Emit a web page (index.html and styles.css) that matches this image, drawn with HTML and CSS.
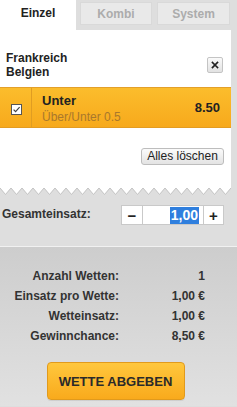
FILE: index.html
```html
<!DOCTYPE html>
<html lang="de">
<head>
<meta charset="utf-8">
<title>Wettschein</title>
<link rel="stylesheet" href="styles.css">
</head>
<body>
<div class="app">
  <div class="top">
    <div class="tabs">
      <div class="tab tab-active">Einzel</div>
      <div class="tab tab-off tab-kombi">Kombi</div>
      <div class="tab tab-off tab-system">System</div>
    </div>
    <div class="card">
      <div class="event">
        <div class="teams">Frankreich<br>Belgien</div>
        <button class="close-btn" aria-label="Entfernen">
          <svg width="8" height="8" viewBox="0 0 8 8"><path d="M1.5 1.5 L6.5 6.5 M6.5 1.5 L1.5 6.5" stroke="#222" stroke-width="1.7" stroke-linecap="square"/></svg>
        </button>
      </div>
      <div class="pick">
        <div class="pick-check">
          <svg width="11" height="11" viewBox="0 0 11 11"><rect x="0.5" y="0.5" width="10" height="10" fill="#fff" stroke="#555"/><path d="M2.6 5.6 L4.6 7.6 L8.6 3.2" fill="none" stroke="#444" stroke-width="1.2"/></svg>
        </div>
        <div class="pick-info">
          <div class="pick-name">Unter</div>
          <div class="pick-market">Über/Unter 0.5</div>
        </div>
        <div class="pick-odds">8.50</div>
      </div>
      <div class="clear-row">
        <button class="clear-btn">Alles löschen</button>
      </div>
    </div>
    <svg class="zigzag" width="231" height="8" viewBox="0 0 231 8">
      <defs>
        <pattern id="zz" width="11" height="8" patternUnits="userSpaceOnUse">
          <path d="M0 0 L5.5 6.5 L11 0 Z" fill="#fff"/>
          <path d="M0 0 L5.5 6.5 L11 0" fill="none" stroke="#c2c2c2" stroke-width="1"/>
        </pattern>
      </defs>
      <rect x="0" y="0" width="231" height="8" fill="url(#zz)"/>
    </svg>
    <div class="stake-row">
      <div class="stake-label">Gesamteinsatz:</div>
      <div class="stepper">
        <div class="step step-minus">−</div>
        <div class="stake-input"><span class="sel">1,00</span></div>
        <div class="step step-plus">+</div>
      </div>
    </div>
  </div>
  <div class="summary">
    <div class="sum-grid">
      <div class="sum-label">Anzahl Wetten:</div><div class="sum-val">1</div>
      <div class="sum-label">Einsatz pro Wette:</div><div class="sum-val">1,00 €</div>
      <div class="sum-label">Wetteinsatz:</div><div class="sum-val">1,00 €</div>
      <div class="sum-label">Gewinnchance:</div><div class="sum-val">8,50 €</div>
    </div>
    <div class="place-row">
      <button class="place-btn">WETTE ABGEBEN</button>
    </div>
  </div>
</div>
</body>
</html>
```
FILE: styles.css
```css
* { box-sizing: border-box; }
html, body {
  margin: 0;
  padding: 0;
}
body {
  width: 237px;
  height: 407px;
  overflow: hidden;
  background: #dedede;
  font-family: "Liberation Sans", Arial, sans-serif;
  font-size: 12px;
  color: #222;
}
button {
  font-family: inherit;
  margin: 0;
  padding: 0;
  cursor: pointer;
}
.app {
  display: flex;
  flex-direction: column;
}
.top {
  width: 231px;
  display: flex;
  flex-direction: column;
}
.tabs {
  display: flex;
  align-items: flex-start;
  height: 30px;
}
.tab {
  font-weight: bold;
  font-size: 12px;
  display: flex;
  align-items: center;
  justify-content: center;
}
.tab-active {
  width: 76px;
  height: 30px;
  background: #fff;
  color: #222;
  padding-bottom: 4px;
}
.tab-off {
  margin-top: 2px;
  height: 23px;
  background: #e9e9e9;
  border: 1px solid #d9d9d9;
  color: #acacac;
  padding-top: 1px;
}
.tab-kombi {
  width: 72px;
  margin-left: 4px;
}
.tab-system {
  width: 73px;
  margin-left: 5px;
}
.card {
  background: #fff;
  display: flex;
  flex-direction: column;
  padding-bottom: 23px;
}
.event {
  display: flex;
  align-items: center;
  justify-content: space-between;
  padding: 21px 8px 0 6px;
}
.teams {
  font-size: 12px;
  font-weight: bold;
  line-height: 14px;
  color: #222;
}
.close-btn {
  width: 16px;
  height: 16px;
  border: 1px solid #c4c4c4;
  border-radius: 2px;
  background: linear-gradient(#fafafa, #e2e2e2);
  display: flex;
  align-items: center;
  justify-content: center;
  margin-top: -1px;
}
.pick {
  margin-top: 8px;
  height: 41px;
  display: flex;
  background: linear-gradient(#fbbd2c, #f7a91c);
  border-top: 1px solid #e3a02a;
  border-bottom: 1px solid #e39c22;
}
.pick-check {
  width: 32px;
  border-right: 1px solid #e09d22;
  display: flex;
  align-items: center;
  justify-content: center;
  padding-left: 2px;
  padding-top: 3px;
}
.pick-check svg { display: block; }
.pick-info {
  flex: 1;
  padding: 5px 0 0 10px;
}
.pick-name {
  font-weight: bold;
  font-size: 13px;
  line-height: 16px;
  color: #222;
}
.pick-market {
  font-size: 12px;
  line-height: 16px;
  color: #a9782c;
}
.pick-odds {
  font-weight: bold;
  font-size: 13px;
  padding: 12px 11px 0 0;
  color: #222;
}
.clear-row {
  display: flex;
  justify-content: flex-end;
  padding: 20px 7px 0 0;
}
.clear-btn {
  width: 83px;
  height: 17px;
  font-size: 12px;
  color: #222;
  border: 1px solid #bdbdbd;
  border-radius: 3px;
  background: linear-gradient(#fbfbfb, #e3e3e3);
  line-height: 15px;
}
.zigzag {
  display: block;
}
.stake-row {
  display: flex;
  align-items: center;
  justify-content: space-between;
  margin-top: 9px;
  padding: 0 7px 0 2px;
  height: 20px;
}
.stake-label {
  font-weight: bold;
  font-size: 12px;
  color: #333;
  margin-top: -2px;
}
.stepper {
  display: flex;
  height: 20px;
  border: 1px solid #c9c9c9;
  background: #fff;
}
.step {
  width: 20px;
  display: flex;
  align-items: center;
  justify-content: center;
  font-weight: bold;
  font-size: 15px;
  color: #222;
}
.step-plus {
  width: 20px;
  border-left: 1px solid #c9c9c9;
}
.stake-input {
  width: 61px;
  border-left: 1px solid #c9c9c9;
  display: flex;
  align-items: center;
  justify-content: flex-end;
  padding-right: 4px;
}
.sel {
  background: #2f7fde;
  color: #fff;
  font-weight: bold;
  font-size: 14px;
  line-height: 17px;
  padding: 0 1px;
}
.summary {
  margin-top: 21px;
  border-top: 1px solid #f1f1f1;
  background: linear-gradient(#cdcdcd, #e1e1e1);
  padding: 19px 6px 0 0;
  height: 160px;
}
.sum-grid {
  display: grid;
  grid-template-columns: 119px 86px;
  line-height: 20px;
  font-weight: bold;
  font-size: 12px;
  color: #333;
}
.sum-label, .sum-val {
  text-align: right;
}
.place-row {
  display: flex;
  justify-content: center;
  margin-top: 16px;
}
.place-btn {
  width: 138px;
  height: 38px;
  border: 1px solid #e19a1c;
  border-radius: 4px;
  background: linear-gradient(#ffc73d, #f9aa1c);
  font-weight: bold;
  font-size: 13px;
  color: #2a2a2a;
  box-shadow: 0 1px 0 rgba(0,0,0,0.08);
}
```
